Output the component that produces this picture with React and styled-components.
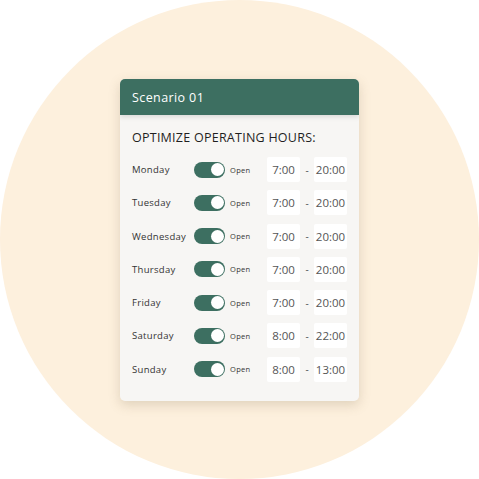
import React from 'react';
import styled, { createGlobalStyle } from 'styled-components';

const GlobalStyle = createGlobalStyle`
  html, body {
    margin: 0;
    padding: 0;
    background: #ffffff;
    font-family: "Open Sans", Lato, sans-serif;
  }
`;

const Page = styled.div`
  width: 479px;
  height: 479px;
  display: flex;
  align-items: center;
  justify-content: center;
`;

const Circle = styled.div`
  width: 479px;
  height: 479px;
  border-radius: 50%;
  background: #fdf0dd;
  display: flex;
  justify-content: center;
  align-items: flex-start;
`;

const Card = styled.div`
  width: 239px;
  margin-top: 79px;
  background: #f7f6f4;
  border-radius: 5px;
  overflow: hidden;
  box-shadow: 0 4px 12px rgba(120, 100, 70, 0.22);
`;

const Header = styled.div`
  height: 36px;
  background: #3d6f61;
  color: #ffffff;
  font-size: 12.5px;
  letter-spacing: 0.4px;
  display: flex;
  align-items: center;
  padding-left: 12px;
  box-shadow: 0 2px 5px rgba(0, 0, 0, 0.12);
`;

const Body = styled.div`
  padding: 15px 12px 19px;
`;

const Title = styled.div`
  font-size: 12.5px;
  line-height: 16px;
  color: #1f1f1f;
  letter-spacing: 0.25px;
  margin-bottom: 11px;
`;

const Rows = styled.div`
  display: flex;
  flex-direction: column;
  gap: 8.3px;
`;

const Row = styled.div`
  display: grid;
  grid-template-columns: 62px 36px 37px 33px 14px 33px;
  align-items: center;
  height: 25px;
`;

const Day = styled.span`
  font-size: 9.5px;
  color: #333333;
  letter-spacing: 0.3px;
`;

const Toggle = styled.div`
  width: 31px;
  height: 16px;
  border-radius: 8px;
  background: ${p => (p.$on ? '#3d6f61' : '#c9c9c9')};
  display: flex;
  align-items: center;
  justify-content: ${p => (p.$on ? 'flex-end' : 'flex-start')};
  padding: 0 1.5px;
  box-sizing: border-box;
`;

const Knob = styled.div`
  width: 13px;
  height: 13px;
  border-radius: 50%;
  background: #ffffff;
`;

const OpenLabel = styled.span`
  font-size: 7.5px;
  color: #333333;
  letter-spacing: 0.3px;
`;

const TimeBox = styled.div`
  height: 25px;
  background: #ffffff;
  border-radius: 2px;
  display: flex;
  align-items: center;
  justify-content: center;
  font-size: 11.5px;
  color: #555555;
`;

const Dash = styled.span`
  text-align: center;
  font-size: 10px;
  color: #555555;
`;

const days = [
  ['Monday', '7:00', '20:00'],
  ['Tuesday', '7:00', '20:00'],
  ['Wednesday', '7:00', '20:00'],
  ['Thursday', '7:00', '20:00'],
  ['Friday', '7:00', '20:00'],
  ['Saturday', '8:00', '22:00'],
  ['Sunday', '8:00', '13:00'],
];

const App = () => {
  return (
    <Page>
      <GlobalStyle />
      <Circle>
        <Card>
          <Header>Scenario 01</Header>
          <Body>
            <Title>OPTIMIZE OPERATING HOURS:</Title>
            <Rows>
              {days.map(([day, from, to]) => (
                <Row key={day}>
                  <Day>{day}</Day>
                  <Toggle $on>
                    <Knob />
                  </Toggle>
                  <OpenLabel>Open</OpenLabel>
                  <TimeBox>{from}</TimeBox>
                  <Dash>-</Dash>
                  <TimeBox>{to}</TimeBox>
                </Row>
              ))}
            </Rows>
          </Body>
        </Card>
      </Circle>
    </Page>
  );
};

export default App;
